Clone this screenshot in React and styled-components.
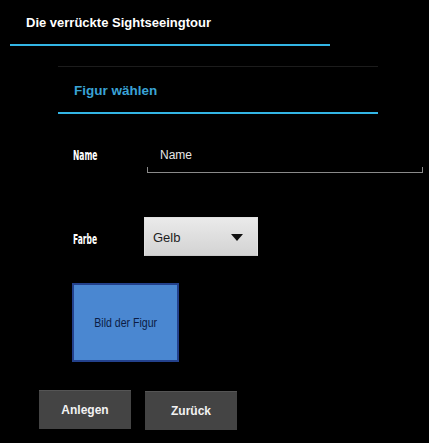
import React from "react";
import styled, { createGlobalStyle } from "styled-components";

const Global = createGlobalStyle`
  html, body { margin: 0; padding: 0; background: #000; }
  body { font-family: "Liberation Sans", Arial, sans-serif; }
`;

const Page = styled.div`
  width: 429px;
  height: 443px;
  background: #000;
  overflow: hidden;
  display: flex;
  flex-direction: column;
`;

const Header = styled.div`
  padding: 15px 0 0 26px;
  height: 29px;
  box-sizing: border-box;
  color: #fff;
  font-size: 13px;
  font-weight: bold;
  line-height: 16px;
`;

const Rule = styled.div`
  height: 2px;
  width: 320px;
  margin-left: ${(p) => p.$left}px;
  background: #33b5e5;
`;

const Panel = styled.section`
  margin: 20px 0 0 58px;
  width: 320px;
  border-top: 1px solid #1c1c1c;
`;

const PanelTitle = styled.h2`
  margin: 0;
  padding: 16px 0 13px 16px;
  font-size: 13.5px;
  line-height: 16px;
  font-weight: bold;
  color: #3aa3d6;
`;

const Form = styled.div`
  display: flex;
  flex-direction: column;
  padding: 31px 0 0 73px;
`;

const Row = styled.div`
  display: flex;
  align-items: flex-start;
  margin-top: ${(p) => p.$top || 0}px;
`;

const Label = styled.span`
  display: block;
  width: ${(p) => p.$w}px;
  flex: none;
  padding-top: ${(p) => p.$pt}px;
  color: #fff;
  font-family: "DejaVu Sans", sans-serif;
  font-stretch: condensed;
  font-weight: bold;
  font-size: 14px;
  line-height: 14px;
  white-space: nowrap;
  & > span {
    display: inline-block;
    transform: scaleX(0.6);
    transform-origin: left center;
  }
`;

const TextField = styled.div`
  position: relative;
  width: 276px;
  box-sizing: border-box;
  padding: 3px 0 10px 13px;
  border-bottom: 1px solid #8a8a8a;
  color: #e6e6e6;
  font-size: 12px;
  line-height: 14px;
  &::before,
  &::after {
    content: "";
    position: absolute;
    bottom: 0;
    width: 1px;
    height: 5px;
    background: #8a8a8a;
  }
  &::before { left: 0; }
  &::after { right: 0; }
`;

const Select = styled.div`
  width: 114px;
  height: 39px;
  box-sizing: border-box;
  display: flex;
  align-items: center;
  justify-content: space-between;
  padding: 1px 14px 0 8px;
  background: linear-gradient(#eaeaea, #d3d3d3);
  border: 1px solid #e2e2e2;
  border-bottom-color: #c8c8c8;
  color: #1e1e1e;
  font-size: 13px;
`;

const Caret = styled.svg`
  width: 12px;
  height: 7px;
  display: block;
`;

const Picture = styled.div`
  margin: 27px 0 0 72px;
  width: 107px;
  height: 79px;
  box-sizing: border-box;
  border: 2px solid #23418c;
  background: #4a87d1;
  display: flex;
  align-items: center;
  justify-content: center;
  color: #0c1c44;
  font-size: 12px;
  & > span {
    display: inline-block;
    transform: scaleX(0.88);
  }
`;

const Actions = styled.div`
  display: flex;
  gap: 14px;
  margin: 28px 0 0 39px;
`;

const Button = styled.button`
  width: 92px;
  height: 39px;
  margin-top: ${(p) => p.$dy || 0}px;
  padding: 0;
  border: none;
  border-top: 1px solid #555;
  background: #444;
  color: #f2f2f2;
  font-family: "Liberation Sans", Arial, sans-serif;
  font-size: 12px;
  font-weight: bold;
  cursor: pointer;
`;

export default function App() {
  return (
    <Page>
      <Global />
      <Header>Die verrückte Sightseeingtour</Header>
      <Rule $left={10} style={{ marginTop: 15 }} />
      <Panel>
        <PanelTitle>Figur wählen</PanelTitle>
        <Rule $left={0} />
      </Panel>
      <Form>
        <Row>
          <Label $w={74} $pt={3}>
            <span>Name</span>
          </Label>
          <TextField>Name</TextField>
        </Row>
        <Row $top={44}>
          <Label $w={71} $pt={15}>
            <span>Farbe</span>
          </Label>
          <Select>
            <span>Gelb</span>
            <Caret viewBox="0 0 12 7">
              <path d="M0 0 H12 L6 7 Z" fill="#111" />
            </Caret>
          </Select>
        </Row>
      </Form>
      <Picture>
        <span>Bild der Figur</span>
      </Picture>
      <Actions>
        <Button>Anlegen</Button>
        <Button $dy={1}>Zurück</Button>
      </Actions>
    </Page>
  );
}
